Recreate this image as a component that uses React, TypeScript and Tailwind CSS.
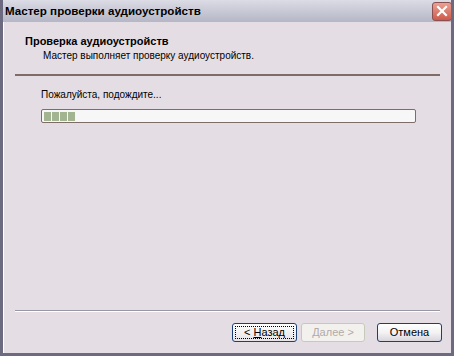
export default function App() {
  const font = { fontFamily: '"Liberation Sans", Arial, sans-serif' };
  return (
    <div
      className="flex h-[356px] w-[454px] flex-col overflow-hidden border-x-[3px] border-b-[3px] border-[#6b6a80] bg-[#e4dee4] text-black"
      style={font}
    >
      {/* заголовок окна */}
      <div className="-mx-[3px] flex h-[22px] shrink-0 items-center justify-between rounded-t-[6px] bg-gradient-to-b from-[#dcdce6] via-[#c9c9d6] to-[#b5b6c6] pl-[5px] pr-[2px]">
        <span className="text-[11.6px] font-bold">Мастер проверки аудиоустройств</span>
        <button
          type="button"
          className="flex h-[19px] w-[20px] items-center justify-center rounded-[3px] border border-[#8a5050] bg-gradient-to-b from-[#e9a094] to-[#cc5a4c]"
        >
          <svg width="12" height="12" viewBox="0 0 12 12">
            <path d="M2 2L10 10M10 2L2 10" stroke="white" strokeWidth="2.2" strokeLinecap="square" />
          </svg>
        </button>
      </div>

      <div className="flex flex-1 flex-col border-l border-white">
        {/* шапка мастера */}
        <div className="flex flex-col pl-[21px] pt-[12px]">
          <span className="text-[11px] font-bold leading-[14px]">Проверка аудиоустройств</span>
          <span className="pl-[18px] pt-[1px] text-[10px] leading-[13px]">
            Мастер выполняет проверку аудиоустройств.
          </span>
        </div>
        <div className="mx-[11px] mt-[12px] h-[2px] bg-[#7e6c68]" />

        {/* содержимое */}
        <div className="flex flex-col pl-[37px] pt-[12px]">
          <span className="text-[10px] leading-[13px]">Пожалуйста, подождите...</span>
          <div className="mt-[8px] flex h-[14px] w-[375px] items-center gap-[1px] rounded-[2px] border border-[#7e6c68] bg-[#f7f7f7] px-[2px]">
            <div className="h-[9px] w-[7px] bg-[#a3b493]" />
            <div className="h-[9px] w-[7px] bg-[#a3b493]" />
            <div className="h-[9px] w-[7px] bg-[#a3b493]" />
            <div className="h-[9px] w-[7px] bg-[#a3b493]" />
          </div>
        </div>

        <div className="flex-1" />

        {/* кнопки */}
        <div className="mx-[11px] border-t border-b border-t-[#9797a6] border-b-white" />
        <div className="flex items-center justify-end pb-[11px] pr-[9px] pt-[11px]">
          <button
            type="button"
            className="flex h-[19px] w-[65px] items-center justify-center rounded-[3px] border border-[#1c3f78] bg-gradient-to-b from-white to-[#e6e3e6] text-[11px] outline-1 outline-dotted -outline-offset-[4px] outline-black"
          >
            &lt; <span className="ml-[3px] underline">Н</span>азад
          </button>
          <button
            type="button"
            disabled
            className="ml-[4px] flex h-[19px] w-[64px] items-center justify-center rounded-[3px] border border-[#c5cbbb] bg-[#f3f1ee] text-[11px] text-[#b3aaa6]"
          >
            <span className="underline">Д</span>алее &gt;
          </button>
          <button
            type="button"
            className="ml-[12px] flex h-[19px] w-[65px] items-center justify-center rounded-[3px] border border-[#1c3f78] bg-gradient-to-b from-white via-[#f4f2f4] to-[#d9d5dd] text-[11px]"
          >
            Отмена
          </button>
        </div>
      </div>
    </div>
  );
}
